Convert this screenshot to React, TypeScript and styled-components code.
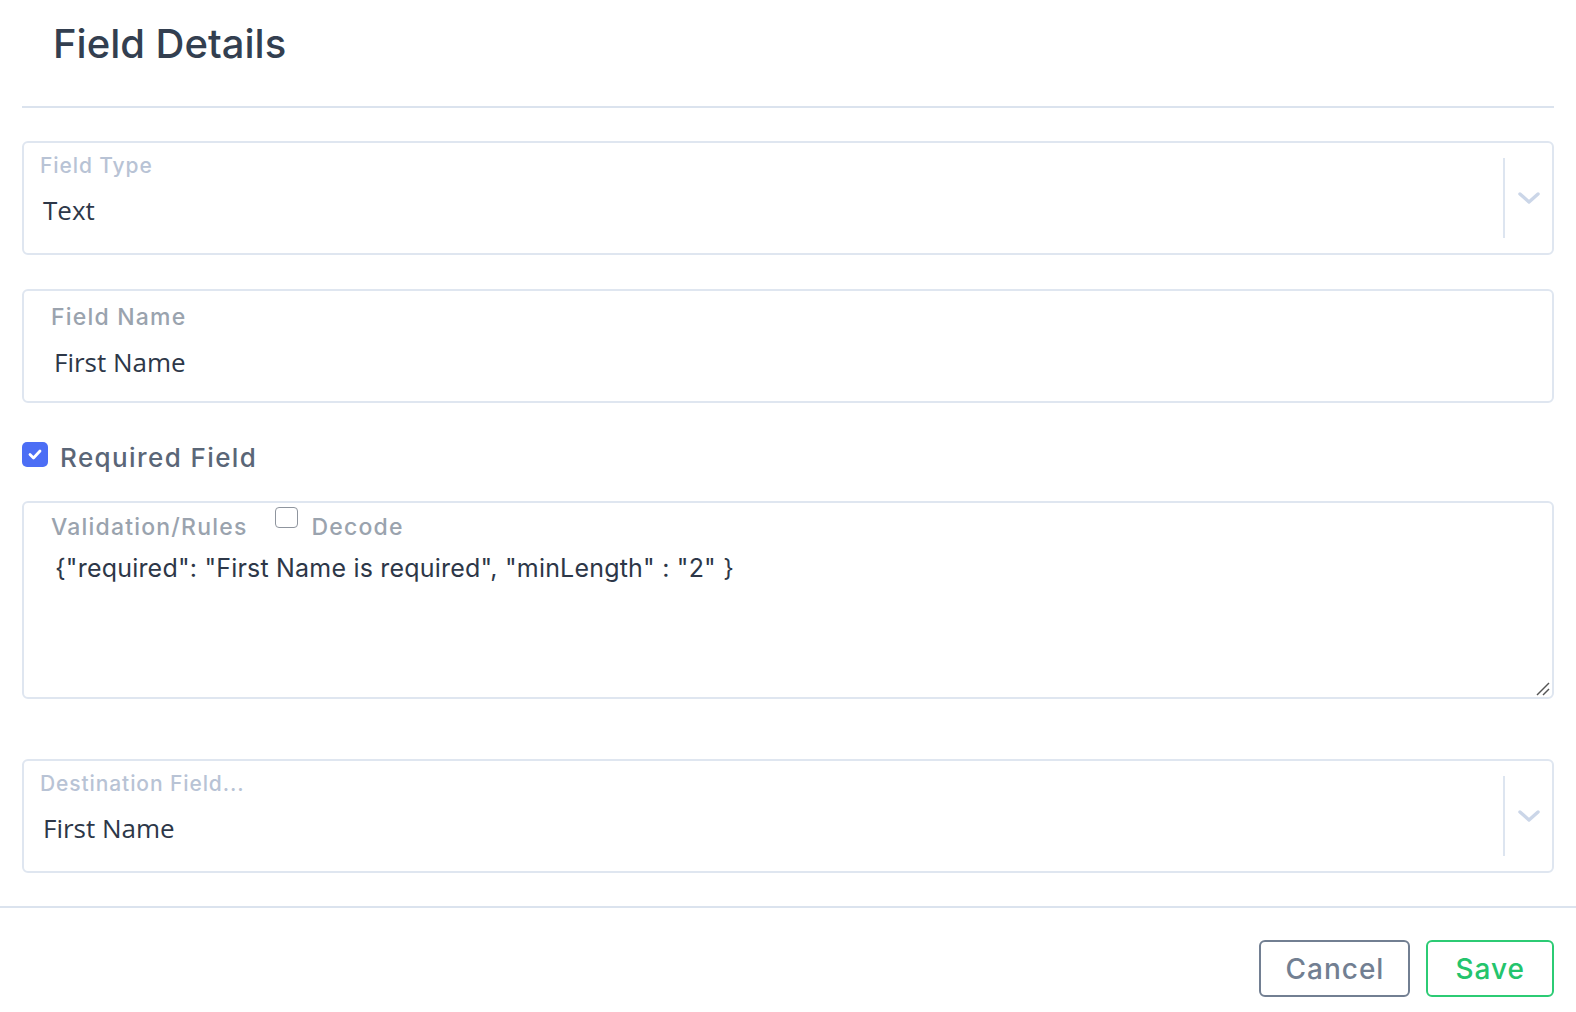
import React from 'react'
import styled, { createGlobalStyle } from 'styled-components'

const GlobalStyle = createGlobalStyle`
  * {
    box-sizing: border-box;
  }
  body {
    margin: 0;
    background: #fff;
    font-family: Inter, 'Noto Sans', sans-serif;
    color: #2d3748;
  }
`

const Page = styled.div`
  display: flex;
  flex-direction: column;
  min-height: 1012px;
`

const Body = styled.div`
  display: flex;
  flex-direction: column;
  padding: 0 22px;
`

const Header = styled.div`
  height: 108px;
  padding: 19px 0 0 31px;
  border-bottom: 2px solid #dbe3ee;
`

const Title = styled.h1`
  margin: 0;
  font-size: 40px;
  line-height: 50px;
  font-weight: 500;
  color: #333f50;
  letter-spacing: 0;
`

const Box = styled.div<{ mt: number; h: number }>`
  display: flex;
  margin-top: ${p => p.mt}px;
  height: ${p => p.h}px;
  border: 2px solid #dfe6f0;
  border-radius: 6px;
  background: #fff;
`

const SelectMain = styled.div`
  flex: 1;
  display: flex;
  flex-direction: column;
  padding: 10px 0 0 16px;
`

const FloatLabel = styled.div`
  font-size: 21px;
  line-height: 26px;
  font-weight: 500;
  letter-spacing: 0.9px;
  color: #b8c3d5;
`

const Value = styled.div<{ indent: number; mt: number }>`
  margin: ${p => p.mt}px 0 0 ${p => p.indent}px;
  font-family: 'Open Sans', sans-serif;
  font-size: 26px;
  line-height: 36px;
  color: #2d3748;
`

const Indicators = styled.div`
  display: flex;
  align-items: center;
  padding: 15px 0;
`

const Separator = styled.div`
  align-self: stretch;
  width: 2px;
  background: #dde5f0;
`

const ChevronWrap = styled.div`
  width: 47px;
  display: flex;
  justify-content: center;
  align-items: center;
  color: #cbd6e8;
`

const InputMain = styled.div`
  flex: 1;
  display: flex;
  flex-direction: column;
  padding: 12px 0 0 27px;
`

const InputLabel = styled.div`
  font-size: 23px;
  line-height: 28px;
  font-weight: 500;
  letter-spacing: 1.2px;
  color: #9aa3ae;
`

const CheckRow = styled.label`
  display: flex;
  align-items: flex-start;
  margin-top: 39px;
  gap: 12px;
`

const CheckBox = styled.span`
  width: 26px;
  height: 25px;
  border-radius: 5px;
  background: #4c6ef5;
  display: flex;
  align-items: center;
  justify-content: center;
`

const CheckLabel = styled.span`
  font-size: 26px;
  line-height: 32px;
  font-weight: 500;
  letter-spacing: 1.4px;
  color: #5a6677;
`

const AreaMain = styled.div`
  flex: 1;
  display: flex;
  flex-direction: column;
  padding: 4px 0 0 27px;
`

const LabelRow = styled.div`
  display: flex;
  align-items: flex-start;
`

const RowLabel = styled(InputLabel)`
  margin-top: 6px;
`

const SmallCheck = styled.span`
  width: 23px;
  height: 21px;
  margin: 0 13px 0 28px;
  border: 1.5px solid #8f959e;
  border-radius: 4px;
  background: #fff;
`

const Code = styled.div`
  margin: 10px 0 0 4px;
  font-size: 25px;
  line-height: 34px;
  letter-spacing: 0.2px;
  color: #2d3748;
`

const Grip = styled.div`
  margin-top: auto;
  align-self: flex-end;
  display: flex;
  padding: 0 2px 1px 0;
`

const Footer = styled.div`
  margin-top: 33px;
  border-top: 2px solid #dbe3ee;
  padding: 32px 22px 0 0;
  display: flex;
  justify-content: flex-end;
  gap: 16px;
`

const Button = styled.button<{ primary?: boolean }>`
  height: 57px;
  padding: 0 ${p => (p.primary ? 27 : 24)}px;
  border-radius: 6px;
  background: #fff;
  border: 2px solid ${p => (p.primary ? '#2ccb74' : '#727f92')};
  color: ${p => (p.primary ? '#24c46c' : '#727f92')};
  font-family: Inter, sans-serif;
  font-size: 28px;
  font-weight: 500;
  letter-spacing: 1px;
  cursor: pointer;
`

const Chevron = () => (
  <svg width="24" height="14" viewBox="0 0 24 14" fill="none">
    <path
      d="M3 3 L12 11 L21 3"
      stroke="currentColor"
      strokeWidth="3.4"
      strokeLinecap="round"
      strokeLinejoin="round"
    />
  </svg>
)

const Select: React.FC<{ label: string; value: string; mt: number }> = ({
  label,
  value,
  mt,
}) => (
  <Box mt={mt} h={114}>
    <SelectMain>
      <FloatLabel>{label}</FloatLabel>
      <Value indent={3} mt={13}>
        {value}
      </Value>
    </SelectMain>
    <Indicators>
      <Separator />
      <ChevronWrap>
        <Chevron />
      </ChevronWrap>
    </Indicators>
  </Box>
)

export default function App() {
  return (
    <Page>
      <GlobalStyle />
      <Body>
        <Header>
          <Title>Field Details</Title>
        </Header>

        <Select label="Field Type" value="Text" mt={33} />

        <Box mt={34} h={114}>
          <InputMain>
            <InputLabel>Field Name</InputLabel>
            <Value indent={3} mt={13}>
              First Name
            </Value>
          </InputMain>
        </Box>

        <CheckRow>
          <CheckBox>
            <svg width="14" height="11" viewBox="0 0 14 11" fill="none">
              <path
                d="M2 5.5 L5.5 9 L12 2"
                stroke="#fff"
                strokeWidth="2.8"
                strokeLinecap="round"
                strokeLinejoin="round"
              />
            </svg>
          </CheckBox>
          <CheckLabel>Required Field</CheckLabel>
        </CheckRow>

        <Box mt={27} h={198}>
          <AreaMain>
            <LabelRow>
              <RowLabel>Validation/Rules</RowLabel>
              <SmallCheck />
              <RowLabel>Decode</RowLabel>
            </LabelRow>
            <Code>
              {'{"required": "First Name is required", "minLength" : "2" }'}
            </Code>
            <Grip>
              <svg width="15" height="15" viewBox="0 0 15 15" fill="none">
                <path d="M14 2 L2 14" stroke="#555" strokeWidth="1.4" />
                <path d="M14 8 L8 14" stroke="#555" strokeWidth="1.4" />
              </svg>
            </Grip>
          </AreaMain>
        </Box>

        <Select label="Destination Field..." value="First Name" mt={60} />
      </Body>

      <Footer>
        <Button>Cancel</Button>
        <Button primary>Save</Button>
      </Footer>
    </Page>
  )
}
